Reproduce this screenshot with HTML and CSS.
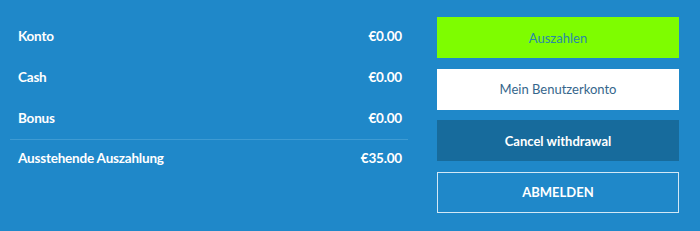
FILE: index.html
```html
<!DOCTYPE html>
<html lang="de">
<head>
<meta charset="utf-8">
<title>Konto</title>
<link rel="stylesheet" href="styles.css">
</head>
<body>
<div class="panel">
  <div class="balances">
    <div class="row"><span>Konto</span><span>€0.00</span></div>
    <div class="row"><span>Cash</span><span>€0.00</span></div>
    <div class="row"><span>Bonus</span><span>€0.00</span></div>
    <div class="row pending"><span>Ausstehende Auszahlung</span><span>€35.00</span></div>
  </div>
  <div class="actions">
    <button class="btn btn-green">Auszahlen</button>
    <button class="btn btn-white">Mein Benutzerkonto</button>
    <button class="btn btn-dark">Cancel withdrawal</button>
    <button class="btn btn-outline">ABMELDEN</button>
  </div>
</div>
</body>
</html>
```
FILE: styles.css
```css
html, body {
  margin: 0;
  padding: 0;
  background: #1f88c9;
  height: 100%;
}
body {
  font-family: "Lato", "Liberation Sans", sans-serif;
  color: #ffffff;
}
.panel {
  display: flex;
  gap: 29px;
  padding: 0 21px 0 10px;
  height: 231px;
  box-sizing: border-box;
}
.balances {
  flex: 0 0 398px;
  padding-top: 15px;
  display: flex;
  flex-direction: column;
}
.row {
  height: 41px;
  display: flex;
  justify-content: space-between;
  align-items: center;
  padding: 0 6px 0 8px;
  font-size: 13.5px;
  font-weight: 700;
  letter-spacing: -0.2px;
}
.row.pending {
  height: 36px;
  margin-top: 1px;
  border-top: 1px solid #3e9bd3;
}
.actions {
  flex: 1;
  padding-top: 17px;
  display: flex;
  flex-direction: column;
  gap: 10.5px;
}
.btn {
  height: 41px;
  border: none;
  font-family: "Lato", "Liberation Sans", sans-serif;
  font-size: 13px;
  font-weight: 700;
  cursor: pointer;
  padding: 0;
}
.btn-green {
  background: #7efd00;
  color: #2a88a8;
  font-weight: 400;
}
.btn-white {
  background: #ffffff;
  color: #36668c;
  font-weight: 400;
}
.btn-dark {
  background: #176b9c;
  color: #ffffff;
}
.btn-outline {
  background: transparent;
  color: #ffffff;
  border: 1px solid #d2e8f6;
}
```
